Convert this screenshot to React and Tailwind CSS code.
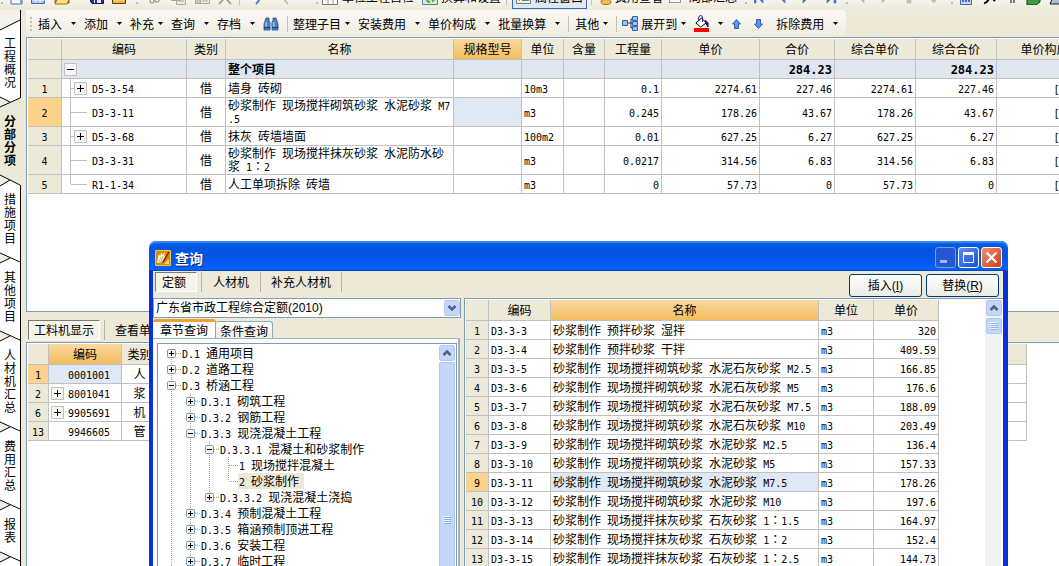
import { Fragment, useState } from 'react';

const sideTabs = ['工程概况', '分部分项', '措施项目', '其他项目', '人材机汇总', '费用汇总', '报表'];

const budgetRows = [
  { no: '1', code: 'D5-3-54', expand: true, kind: '借', name: '墙身 砖砌', unit: '10m3', qty: '0.1', price: '2274.61', total: '227.46' },
  { no: '2', code: 'D3-3-11', kind: '借', name: '砂浆制作 现场搅拌砌筑砂浆 水泥砂浆 M7.5', unit: 'm3', qty: '0.245', price: '178.26', total: '43.67', active: true },
  { no: '3', code: 'D5-3-68', expand: true, kind: '借', name: '抹灰 砖墙墙面', unit: '100m2', qty: '0.01', price: '627.25', total: '6.27' },
  { no: '4', code: 'D3-3-31', kind: '借', name: '砂浆制作 现场搅拌抹灰砂浆 水泥防水砂浆 1：2', unit: 'm3', qty: '0.0217', price: '314.56', total: '6.83' },
  { no: '5', code: 'R1-1-34', kind: '借', name: '人工单项拆除 砖墙', unit: 'm3', qty: '0', price: '57.73', total: '0', last: true }
];

const resourceRows = [
  { no: '1', code: '0001001', kind: '人', active: true },
  { no: '2', code: '8001041', kind: '浆', expand: true },
  { no: '6', code: '9905691', kind: '机', expand: true },
  { no: '13', code: '9946605', kind: '管' }
];

const quotaRows = [
  ['D3-3-3', '砂浆制作 预拌砂浆 湿拌', '320'],
  ['D3-3-4', '砂浆制作 预拌砂浆 干拌', '409.59'],
  ['D3-3-5', '砂浆制作 现场搅拌砌筑砂浆 水泥石灰砂浆 M2.5', '166.85'],
  ['D3-3-6', '砂浆制作 现场搅拌砌筑砂浆 水泥石灰砂浆 M5', '176.6'],
  ['D3-3-7', '砂浆制作 现场搅拌砌筑砂浆 水泥石灰砂浆 M7.5', '188.09'],
  ['D3-3-8', '砂浆制作 现场搅拌砌筑砂浆 水泥石灰砂浆 M10', '203.49'],
  ['D3-3-9', '砂浆制作 现场搅拌砌筑砂浆 水泥砂浆 M2.5', '136.4'],
  ['D3-3-10', '砂浆制作 现场搅拌砌筑砂浆 水泥砂浆 M5', '157.33'],
  ['D3-3-11', '砂浆制作 现场搅拌砌筑砂浆 水泥砂浆 M7.5', '178.26'],
  ['D3-3-12', '砂浆制作 现场搅拌砌筑砂浆 水泥砂浆 M10', '197.6'],
  ['D3-3-13', '砂浆制作 现场搅拌抹灰砂浆 石灰砂浆 1：1.5', '164.97'],
  ['D3-3-14', '砂浆制作 现场搅拌抹灰砂浆 石灰砂浆 1：2', '152.4'],
  ['D3-3-15', '砂浆制作 现场搅拌抹灰砂浆 石灰砂浆 1：2.5', '144.73']
];

// guides: one letter per indent level
// v = line passing, t = branch, l = last branch, + / - = toggle box
const treeRows = [
  { guides: '+', label: 'D.1 通用项目', first: true },
  { guides: '+', label: 'D.2 道路工程' },
  { guides: '-', label: 'D.3 桥涵工程' },
  { guides: 'v+', label: 'D.3.1 砌筑工程' },
  { guides: 'v+', label: 'D.3.2 钢筋工程' },
  { guides: 'v-', label: 'D.3.3 现浇混凝土工程' },
  { guides: 'vv-', label: 'D.3.3.1 混凝土和砂浆制作' },
  { guides: 'vvvt', label: '1 现场搅拌混凝土' },
  { guides: 'vvvl', label: '2 砂浆制作' },
  { guides: 'vv+', label: 'D.3.3.2 现浇混凝土浇捣', end: true },
  { guides: 'v+', label: 'D.3.4 预制混凝土工程' },
  { guides: 'v+', label: 'D.3.5 箱涵预制顶进工程' },
  { guides: 'v+', label: 'D.3.6 安装工程' },
  { guides: 'v+', label: 'D.3.7 临时工程' }
];

const headCell = 'h-[21px] border-r border-b border-[#c0c0c0] bg-[#ece9d8] p-0 text-center font-normal';
const headCellHot = 'h-[21px] border-r border-b border-[#c0c0c0] bg-linear-to-b from-[#fad9a0] to-[#f2bd5c] p-0 text-center font-normal';
const cell = 'border-r border-b border-[#c0c0c0] py-0 pr-0 pl-[2px]';
const midCell = 'border-r border-b border-[#c0c0c0] p-0 text-center';
const numCell = 'border-r border-b border-[#c0c0c0] py-0 pr-[2px] pl-0 text-right';
const table = 'table-fixed border-separate border-spacing-0 leading-[12px]';

const halfWidth = "font-['DejaVu_Sans_Mono',monospace] text-[10px] leading-[10px]";
const halfWidthBold = "font-['DejaVu_Sans_Mono',monospace] text-[12px] leading-[12px]";

// Latin runs go in a half-width mono face so that they line up with the Chinese text,
// and the full-width colon in a face that centres it
const Mixed = ({ children, bold }) =>
  String(children)
    .split(/([\x20-\x7e]+|：)/)
    .map((part, i) => {
      if (part === '：') {
        return <span key={i} lang="ja" className="font-['Noto_Sans_CJK_JP',sans-serif]">{part}</span>;
      }
      return i % 2 ? (
        <span key={i} className={bold ? halfWidthBold : halfWidth}>{part}</span>
      ) : (
        <Fragment key={i}>{part}</Fragment>
      );
    });

const Grip = () => (
  <svg width="3" height="16" className="shrink-0" aria-hidden="true">
    {[1, 5, 9, 13].map((y) => (
      <rect key={y} y={y} width="2" height="2" fill="#c1beb0" />
    ))}
  </svg>
);

const Divider = () => <span className="h-4 w-px shrink-0 bg-[#c5c2b0]" />;

const Caret = () => (
  <svg width="5" height="3" className="shrink-0" aria-hidden="true">
    <path d="M0 0h5L2.500 3z" fill="#000" />
  </svg>
);

const MenuButton = ({ label, tight, children }) => (
  <button type="button" aria-label={label} className={`mr-2 flex shrink-0 items-center ${tight ? 'gap-1' : 'gap-[9px]'}`}>
    {children ?? label}
    <Caret />
  </button>
);

/* ---------- top strip ---------- */

const NavArrow = ({ d, gray }) => (
  <svg width="12" height="16" viewBox="0 0 12 16" className="shrink-0" aria-hidden="true">
    <path d={d} fill={gray ? '#c4c1b4' : '#4a86e8'} stroke={gray ? '#b5b2a4' : '#2f63c0'} strokeWidth="0.6" />
  </svg>
);

const TopStrip = () => (
  <header className="flex h-[10px] shrink-0 items-end overflow-hidden bg-linear-to-b from-[#f6f4ec] to-[#ece9d8]">
    <div className="flex h-[26px] shrink-0 items-center whitespace-nowrap">
      <span className="mr-[6px] ml-px flex"><Grip /></span>
      <svg width="16" height="16" className="mr-[5px] shrink-0"><path d="M1 0h11v15H1z" fill="#f4f9ff" stroke="#49719f" /><path d="M10 11h2v3h-2z" fill="#7aa0d0" /></svg>
      <svg width="16" height="16" className="mr-[7px] shrink-0"><path d="M.5.5h13v14H.5z" fill="#9fc1f5" stroke="#4667a5" /><path d="M1 8h13M1 11h13M5 1v13M9 1v13" stroke="#fff" /></svg>
      <svg width="18" height="16" className="mr-[18px] shrink-0"><path d="M1 14V2h6l2 2h6v10z" fill="#d7962a" stroke="#8a5a10" /><path d="M1 15l4-9h12l-4 9z" fill="#ffdf80" stroke="#a46d14" /></svg>
      <svg width="15" height="16" className="mr-[7px] shrink-0"><path d="M.5.5h13v14H2l-1.500-2z" fill="#2b2ba0" stroke="#101060" /><path d="M4 9h7v5H4z" fill="#e8ecf8" /><path d="M5 10h2v4H5z" fill="#2b2ba0" /></svg>
      <svg width="15" height="16" className="mr-[9px] shrink-0"><path d="M.5 2.500h13v12H.5z" fill="#f0b73e" stroke="#5b3c0a" /><path d="M2 10h10" stroke="#ffe6a0" strokeWidth="3" /></svg>
      <Grip />
      <svg width="14" height="16" className="ml-[10px] mr-[8px] shrink-0"><path d="M3 0l5 9M9 0L5 9" stroke="#aaa799" strokeWidth="1.500" /><circle cx="3" cy="12" r="2" fill="none" stroke="#aaa799" strokeWidth="1.500" /><circle cx="8" cy="11" r="2" fill="none" stroke="#aaa799" strokeWidth="1.500" /></svg>
      <svg width="16" height="16" className="mr-2 shrink-0"><path d="M.5.5h9v11h-9zM5.500 4.500h9v11h-9z" fill="#eceadf" stroke="#aaa799" /><path d="M8 9h5M8 12h5" stroke="#aaa799" /></svg>
      <svg width="16" height="16" className="mr-[7px] shrink-0"><path d="M.5.500h12v14H.5z" fill="#c9c6b9" stroke="#aaa799" /><path d="M5.500 5.500h9v9h-9z" fill="#f1efe6" stroke="#aaa799" /><path d="M7 9h6M7 12h6" stroke="#aaa799" /></svg>
      <svg width="15" height="16" className="mr-[6px] shrink-0"><path d="M1 2l12 13M13 2L1 15" stroke="#aaa799" strokeWidth="2" /></svg>
      <Divider />
      <svg width="14" height="16" className="mx-[10px] shrink-0"><path d="M2 2c10-1 11 6 4 13" fill="none" stroke="#4a7edc" strokeWidth="2" /></svg>
      <svg width="14" height="16" className="ml-[6px] mr-[22px] shrink-0"><path d="M12 2C2 1 1 8 8 15" fill="none" stroke="#c4c1b4" strokeWidth="2" /></svg>
      <Grip />
      <svg width="17" height="16" className="mx-[3px] shrink-0"><path d="M.5.5h15v15H.5z" fill="#fff" stroke="#777" /><path d="M1 10h15M6 1v15M11 1v15" stroke="#999" /><path d="M2 8h4l-2 4z" fill="#55b030" /></svg>
      <button type="button" className="mr-2">单位工程自检</button>
      <button type="button" className="flex items-center gap-[2px]">
        <svg width="17" height="17"><path d="M.5.5h15v15H.5z" fill="#d6efcb" stroke="#587cbd" /><circle cx="8" cy="9" r="4" fill="none" stroke="#4fa83a" strokeWidth="2" strokeDasharray="4 2" /></svg>
        换算和设置
      </button>
      <span className="mx-[5px] flex"><Divider /></span>
      <button type="button" className="flex h-[23px] items-center gap-1 border border-[#316ac5] bg-[#e1e6f0] px-[3px]">
        <svg width="15" height="16"><path d="M.5.5h14v14H.5z" fill="#eef3ea" stroke="#777" /><path d="M3 11h1M6 11h7M3 7h1M6 7h7" stroke="#4f9a4f" strokeWidth="2" /></svg>
        属性窗口
      </button>
      <span className="mr-[5px] ml-1 flex"><Divider /></span>
      <button type="button" className="flex items-center gap-[2px]">
        <svg width="16" height="16"><ellipse cx="6" cy="9" rx="5" ry="2" fill="#f3c14e" stroke="#a9741a" /><ellipse cx="9" cy="13" rx="5" ry="2.500" fill="#f3c14e" stroke="#a9741a" /></svg>
        费用查看
      </button>
      <label className="ml-[6px] flex items-center gap-2">
        <input type="checkbox" className="size-[12px] appearance-none border border-[#9a978a] bg-[#f7f6f0]" />
        局部汇总
      </label>
      <span className="mr-[6px] ml-2 flex"><Grip /></span>
      <div className="flex gap-[12px]">
        <NavArrow d="M0 2h2v12H0zM9 2v12L3 8z" />
        <NavArrow d="M7 2v12L1 8z" />
        <NavArrow d="M1 2v12l6-6z" />
        <NavArrow d="M1 2v12l6-6zM8 2h2v12H8z" />
      </div>
      <span className="mx-2 flex"><Grip /></span>
      <div className="mr-[10px] flex gap-[12px]">
        <NavArrow gray d="M7 2v12L1 8z" />
        <NavArrow gray d="M1 2v12l6-6z" />
        <NavArrow gray d="M2 9h4v5H2z" />
        <NavArrow gray d="M0 9h9l-4 5z" />
      </div>
      <Grip />
      <svg width="13" height="16" className="mx-[6px] shrink-0"><path d="M.5.5h11v15H.5z" fill="#c8daf7" stroke="#4568a8" /><path d="M2 9h8M2 12h8" stroke="#4568a8" strokeDasharray="2 1" strokeWidth="2" /></svg>
      <svg width="16" height="16" className="mr-[9px] ml-1 shrink-0"><path d="M1 14c4 1 4-6 8-6M8 8l4 4" fill="none" stroke="#000" strokeWidth="2" /></svg>
      <svg width="12" height="16" className="mr-[6px] shrink-0"><path d="M3 2v12M6 2v12" stroke="#000" /></svg>
      <svg width="15" height="16" className="mr-[8px] shrink-0"><path d="M1 3l10-2 3 2v10l-4 3H1z" fill="#3f9a45" stroke="#123f16" /></svg>
      <svg width="16" height="16" className="shrink-0"><path d="M1 15l3-7h12v7z" fill="#a9bcd8" stroke="#222" /></svg>
    </div>
  </header>
);

/* ---------- left tabs ---------- */

const TabEdge = ({ type }) => (
  <svg width="22" height="26" className="block shrink-0" aria-hidden="true">
    {type === 'top' && (
      <>
        <path d="M0 0h20v10L0 20z" fill="#f3f2ea" />
        <path d="M20 10v16H0v-6z" fill="#fff" />
        <path d="M0 20L20 10" stroke="#000" fill="none" />
        <path d="M20.500 0v26" stroke="#000" />
      </>
    )}
    {type === 'plain' && (
      <>
        <path d="M0 0h20v26H0z" fill="#fff" />
        <path d="M0 9l10 5-10 5z" fill="#f0eee3" />
        <path d="M0 9l20 9M0 19l10-5" stroke="#000" fill="none" />
        <path d="M20.500 0v26" stroke="#000" />
      </>
    )}
    {type === 'before' && (
      <>
        <path d="M0 0h20v10L0 19z" fill="#fff" />
        <path d="M0 9l10 5-10 5z" fill="#f0eee3" />
        <path d="M0 19l20-9M0 9l10 5" stroke="#000" fill="none" />
        <path d="M20.500 0v10" stroke="#000" />
      </>
    )}
    {type === 'after' && (
      <>
        <path d="M0 9l20 10v7H0z" fill="#fff" />
        <path d="M0 9l10 5-10 6z" fill="#f0eee3" />
        <path d="M0 9l20 10M0 20l10-6" stroke="#000" fill="none" />
        <path d="M20.500 19v7" stroke="#000" />
      </>
    )}
  </svg>
);

const SideTabs = () => {
  const [active, setActive] = useState(1);

  return (
    <nav className="flex w-[22px] shrink-0 flex-col">
      <TabEdge type={active === 0 ? 'before' : 'top'} />
      {sideTabs.map((label, i) => (
        <Fragment key={label}>
          <button
            type="button"
            onClick={() => setActive(i)}
            className={`flex w-[21px] shrink-0 pl-1 ${
              i === active ? 'bg-[#ece9d8] font-bold' : 'border-r border-black bg-white'
            }`}
          >
            <span className="w-[13px] text-left leading-[13px] break-all">{label}</span>
          </button>
          <TabEdge type={i === active ? 'after' : i + 1 === active ? 'before' : 'plain'} />
        </Fragment>
      ))}
    </nav>
  );
};

/* ---------- second toolbar ---------- */

const ActionBar = () => (
  <div className="flex h-[27px] shrink-0">
    <div className="flex shrink-0 items-center rounded-r bg-linear-to-b from-[#fbfaf6] to-[#efecdf] pl-1 whitespace-nowrap">
      <Grip />
      <span className="w-[5px]" />
      <MenuButton label="插入" />
      <MenuButton label="添加" />
      <MenuButton label="补充" tight />
      <MenuButton label="查询" />
      <MenuButton label="存档" />
      <button type="button" aria-label="查找" className="mr-2">
        <svg width="16" height="14" viewBox="0 0 16 14" className="block">
          <path d="M3 1h3v3l1 1v8H1V7zM10 1h3l2 6v6H9V5l1-1z" fill="#4b7fc4" stroke="#24508c" strokeWidth="0.8" />
          <path d="M6.500 5h3v4h-3z" fill="#7ea6dc" />
          <path d="M3 5v6M11 5v6" stroke="#cfe0f7" />
          <path d="M1 10.500h6M9 10.500h6" stroke="#173a70" />
        </svg>
      </button>
      <Divider />
      <span className="w-[5px]" />
      <MenuButton label="整理子目" tight />
      <MenuButton label="安装费用" />
      <MenuButton label="单价构成" />
      <MenuButton label="批量换算" />
      <Divider />
      <span className="w-[6px]" />
      <MenuButton label="其他" tight />
      <Divider />
      <span className="w-[5px]" />
      <MenuButton label="展开到" tight>
        <span className="flex items-center gap-[3px]">
          <svg width="16" height="15" viewBox="0 0 16 15">
            <path d="M6 7h3M9 3v9M9 3h2M9 12h2M9 7h2" stroke="#333" fill="none" />
            <path d="M.5 4.500h5v5h-5zM10.500.500h5v4h-5zM10.500 5.500h5v4h-5zM10.500 10.500h5v4h-5z" fill="#9cc3f7" stroke="#2f62b5" />
          </svg>
          展开到
        </span>
      </MenuButton>
      <MenuButton label="填充颜色">
        <svg width="15" height="17" viewBox="0 0 16 17" preserveAspectRatio="none">
          <path d="M2 8l6-5 5 5-6 4z" fill="#fff" stroke="#000" />
          <path d="M5 6V2l2-2 2 2v5" fill="none" stroke="#14148c" />
          <path d="M12 5l3 3v4l-2-3z" fill="#14148c" stroke="#14148c" />
          <path d="M0 13h16v4H0z" fill="#f00" />
        </svg>
      </MenuButton>
      <button type="button" aria-label="上移" className="mr-[13px] ml-px">
        <svg width="9" height="10" className="block"><path d="M4.500.5l4 4.500H6.500v4.500h-4V5H.5z" fill="#5b93ee" stroke="#2d62bd" /></svg>
      </button>
      <button type="button" aria-label="下移" className="mr-[13px]">
        <svg width="9" height="10" className="block"><path d="M4.500 9.500l4-4.500H6.500V.5h-4V5H.5z" fill="#5b93ee" stroke="#2d62bd" /></svg>
      </button>
      <MenuButton label="拆除费用" />
    </div>
  </div>
);

/* ---------- grids ---------- */

const Toggle = ({ open }) => (
  <svg width="13" height="13" className="block shrink-0" aria-hidden="true">
    <path d="M.5.5h12v12H.5z" fill="#f7f6f2" stroke="#c0c0c0" />
    <path d={open ? 'M3 6.500h7' : 'M3 6.500h7M6.500 3v7'} stroke="#000" />
  </svg>
);

const BudgetGrid = () => (
  <table className={`${table} w-[1089px]`}>
    <colgroup>
      <col className="w-[34px]" />
      <col className="w-[125px]" />
      <col className="w-[39px]" />
      <col className="w-[228px]" />
      <col className="w-[68px]" />
      <col className="w-[42px]" />
      <col className="w-[41px]" />
      <col className="w-[57px]" />
      <col className="w-[98px]" />
      <col className="w-[75px]" />
      <col className="w-[81px]" />
      <col className="w-[81px]" />
      <col className="w-[120px]" />
    </colgroup>
    <thead>
      <tr>
        <th className={headCell} />
        {['编码', '类别', '名称'].map((h) => (
          <th key={h} className={headCell}>{h}</th>
        ))}
        <th className={headCellHot}>规格型号</th>
        {['单位', '含量', '工程量', '单价', '合价', '综合单价', '综合合价', '单价构成文件'].map((h) => (
          <th key={h} className={headCell}>{h}</th>
        ))}
      </tr>
    </thead>
    <tbody>
      <tr className="h-[19px] bg-[#dfe6f0] font-bold">
        <td className={`${cell} bg-[#ece9d8]`} />
        <td className={cell}><Toggle open /></td>
        <td className={cell} />
        <td className={cell}>整个项目</td>
        <td className={cell} />
        <td className={cell} />
        <td className={cell} />
        <td className={cell} />
        <td className={cell} />
        <td className={numCell}><Mixed bold>284.23</Mixed></td>
        <td className={cell} />
        <td className={numCell}><Mixed bold>284.23</Mixed></td>
        <td className={cell} />
      </tr>
      {budgetRows.map((row) => (
        <tr key={row.no} className={row.name.length > 20 ? 'h-[29px]' : 'h-[19px]'}>
          <td className={`${midCell} ${row.active ? 'bg-[#ffd28c]' : 'bg-[#ece9d8]'}`}><Mixed>{row.no}</Mixed></td>
          <td className="border-r border-b border-[#c0c0c0] p-0">
            <div className={`flex items-center ${row.name.length > 20 ? 'h-[28px]' : 'h-[18px]'}`}>
              <span className="flex h-full w-[9px] shrink-0 flex-col items-end">
                <span className={`w-px bg-[#c0c0c0] ${row.last ? 'h-1/2' : 'h-full'}`} />
              </span>
              <span className={`h-px bg-[#c0c0c0] ${row.expand ? 'w-[3px]' : 'w-[16px]'}`} />
              {row.expand ? <Toggle /> : null}
              <span className="ml-[5px]"><Mixed>{row.code}</Mixed></span>
            </div>
          </td>
          <td className={midCell}>{row.kind}</td>
          <td className={`${cell} [line-break:anywhere]`}><Mixed>{row.name}</Mixed></td>
          <td className={`${cell} ${row.active ? 'bg-[#dfe9f5]' : ''}`} />
          <td className={cell}><Mixed>{row.unit}</Mixed></td>
          <td className={cell} />
          <td className={numCell}><Mixed>{row.qty}</Mixed></td>
          <td className={numCell}><Mixed>{row.price}</Mixed></td>
          <td className={numCell}><Mixed>{row.total}</Mixed></td>
          <td className={numCell}><Mixed>{row.price}</Mixed></td>
          <td className={numCell}><Mixed>{row.total}</Mixed></td>
          <td className={midCell}><Mixed>[</Mixed></td>
        </tr>
      ))}
    </tbody>
  </table>
);

const ResourceGrid = () => (
  <table className={`${table} w-[999px]`}>
    <colgroup>
      <col className="w-[21px]" />
      <col className="w-[73px]" />
      <col className="w-[36px]" />
      <col />
    </colgroup>
    <thead>
      <tr>
        <th className={headCell} />
        <th className={headCellHot}>编码</th>
        <th className={headCell}>类别</th>
        <th className={headCell} />
      </tr>
    </thead>
    <tbody>
      {resourceRows.map((row) => (
        <tr key={row.no} className="h-[19px]">
          <td className={`${midCell} ${row.active ? 'bg-[#ffd28c]' : 'bg-[#ece9d8]'}`}><Mixed>{row.no}</Mixed></td>
          <td className={`${cell} ${row.active ? 'bg-[#dfe9f5]' : ''}`}>
            <div className="flex items-center">
              <span className="w-[17px]">{row.expand ? <Toggle /> : null}</span>
              <span><Mixed>{row.code}</Mixed></span>
            </div>
          </td>
          <td className={midCell}>{row.kind}</td>
          <td className={cell} />
        </tr>
      ))}
    </tbody>
  </table>
);

const QuotaGrid = () => {
  const [selected, setSelected] = useState('D3-3-11');

  return (
    <table className={`${table} w-[473px]`}>
      <colgroup>
        <col className="w-[23px]" />
        <col className="w-[62px]" />
        <col className="w-[268px]" />
        <col className="w-[55px]" />
        <col className="w-[65px]" />
      </colgroup>
      <thead>
        <tr>
          <th className={headCell} />
          <th className={headCell}>编码</th>
          <th className={headCellHot}>名称</th>
          <th className={headCell}>单位</th>
          <th className={headCell}>单价</th>
        </tr>
      </thead>
      <tbody>
        {quotaRows.map(([code, name, price], i) => (
          <tr key={code} className="h-[19px]" onClick={() => setSelected(code)}>
            <td className={`${midCell} ${code === selected ? 'bg-[#ffd28c]' : 'bg-[#ece9d8]'}`}><Mixed>{i + 1}</Mixed></td>
            <td className={cell}><Mixed>{code}</Mixed></td>
            <td className={`${cell} whitespace-nowrap ${code === selected ? 'bg-[#dfe9f5]' : ''}`}><Mixed>{name}</Mixed></td>
            <td className={cell}><Mixed>m3</Mixed></td>
            <td className={numCell}><Mixed>{price}</Mixed></td>
          </tr>
        ))}
      </tbody>
    </table>
  );
};

/* ---------- query dialog ---------- */

const TreeGuide = ({ kind, first, end }) => {
  const dots = { stroke: '#a5a294', strokeDasharray: '1 1', fill: 'none' };
  const box = kind === '+' || kind === '-';

  return (
    <svg width="19" height="16" className="block shrink-0" aria-hidden="true">
      <path d={`M9.500 ${first ? 8 : 0}V${kind === 'l' || end ? 8 : 16}`} {...dots} />
      {kind !== 'v' && <path d="M10 8.500h9" {...dots} />}
      {box && (
        <>
          <rect x="5.500" y="4.500" width="8" height="8" rx="1" fill="#f4f2ea" stroke="#7898b5" />
          <path d={kind === '+' ? 'M7 8.500h5M9.500 6v5' : 'M7 8.500h5'} stroke="#000" />
        </>
      )}
    </svg>
  );
};

const ChapterTree = () => {
  const [selected, setSelected] = useState('2 砂浆制作');

  return (
    <ul className="min-w-0 flex-1 overflow-hidden pl-1">
      {treeRows.map((row) => {
        const guides = row.guides.split('');
        return (
          <li key={row.label} className="flex h-4 items-center whitespace-nowrap">
            {guides.map((kind, i) => (
              <TreeGuide key={i} kind={kind} first={row.first} end={row.end && i === guides.length - 1} />
            ))}
            <button
              type="button"
              onClick={() => setSelected(row.label)}
              className={`h-4 pr-[5px] pl-px leading-4 ${row.label === selected ? 'bg-[#ece9d8]' : ''}`}
            >
              <Mixed>{row.label}</Mixed>
            </button>
          </li>
        );
      })}
    </ul>
  );
};

const ScrollArrow = ({ down }) => (
  <svg width="16" height="16" className="block shrink-0" aria-hidden="true">
    <rect x=".5" y=".5" width="15" height="15" rx="2" fill="#c6d6fb" stroke="#b2c6f3" />
    <path d={down ? 'M4.500 6l3.500 3.500L11.500 6' : 'M4.500 10L8 6.500l3.500 3.500'} fill="none" stroke="#4d6185" strokeWidth="2.500" />
  </svg>
);

const ThumbGrip = () => (
  <svg width="8" height="8" aria-hidden="true">
    <path d="M0 .5h7M0 2.500h7M0 4.500h7M0 6.500h7" stroke="#eef4fe" />
    <path d="M1 1.500h7M1 3.500h7M1 5.500h7M1 7.500h7" stroke="#8cb0f8" />
  </svg>
);

const titleButton = 'flex size-[21px] items-center justify-center rounded-[3px] border';

const TitleBar = () => (
  <div className="flex h-[30px] shrink-0 items-center rounded-t-[7px] bg-linear-to-b from-[#0058e0] via-[#0055e5] to-[#0066ff] px-[6px] pt-[3px] shadow-[inset_0_3px_2px_-1px_#3c90ff,inset_0_-2px_1px_-1px_#0040c8]">
    <svg width="16" height="16" className="mr-[4px] block" aria-hidden="true">
      <path d="M.5.5h15v15H.5z" fill="#d98a12" stroke="#f4c352" />
      <path d="M2 13l1-6 1-3 1 2 2-4 0 3 3-3-1 4 2-1-2 4c-1 3-4 4-7 4z" fill="#fff3d0" />
      <path d="M4 12l2-5M6 12l2-6" stroke="#c08a3a" strokeWidth="0.6" />
      <path d="M14 2L8 12" stroke="#7a2c06" strokeWidth="1.500" />
      <path d="M9 14h5V9z" fill="#ffd768" />
    </svg>
    <h2 className="text-[14px] leading-[18px] font-bold text-white [text-shadow:1px_1px_0_#0a2a80]">查询</h2>
    <div className="ml-auto flex gap-[2px]">
      <button type="button" aria-label="最小化" className={`${titleButton} border-[#7d9cec] bg-[#2457d2]`}>
        <svg width="13" height="13"><path d="M1 9h7v3H1z" fill="#9db6f0" /></svg>
      </button>
      <button type="button" aria-label="最大化" className={`${titleButton} border-white bg-linear-to-br from-[#5b8cf4] to-[#1a4fd0]`}>
        <svg width="13" height="13"><path d="M1.500 1.500h10v10h-10z" fill="none" stroke="#fff" /><path d="M1 1h11v3H1z" fill="#fff" /></svg>
      </button>
      <button type="button" aria-label="关闭" className={`${titleButton} border-white bg-linear-to-br from-[#f08c6e] to-[#d03a12]`}>
        <svg width="13" height="13"><path d="M1.500 1.500l10 10M11.500 1.500l-10 10" stroke="#fff" strokeWidth="2.200" /></svg>
      </button>
    </div>
  </div>
);

const dialogButton = 'h-[23px] w-[73px] rounded-[3px] border border-[#003c74] bg-linear-to-b from-white to-[#ecebe5] text-center';
const accelKey = "font-['Liberation_Sans',sans-serif]";

const QueryDialog = () => (
  <section aria-label="查询" className="absolute top-[241px] right-[51px] bottom-0 left-[149px] flex flex-col">
    <TitleBar />
    <div className="flex min-h-0 flex-1 flex-col border-r-[5px] border-l-4 border-[#0831d9] bg-[#ece9d8]">
      <div className="flex h-[27px] shrink-0 items-start pr-1 pl-[2px]">
        <div className="flex items-center pt-px">
          <button type="button" className="h-5 w-[42px] border border-t-[#7d7b70] border-r-white border-b-white border-l-[#7d7b70] bg-[#f5f3ea] pr-1">定额</button>
          <span className="mx-1 h-5 w-px bg-[#b5b2a4]" />
          <button type="button" className="h-5 w-[50px]">人材机</button>
          <span className="mx-1 h-5 w-px bg-[#b5b2a4]" />
          <button type="button" className="h-5 w-[72px]">补充人材机</button>
          <span className="mx-1 h-5 w-px bg-[#b5b2a4]" />
        </div>
        <div className="ml-auto flex gap-1 pt-[3px]">
          <button type="button" className={dialogButton}>插入<span className={accelKey}>(<u>I</u>)</span></button>
          <button type="button" className={dialogButton}>替换<span className={accelKey}>(<u>R</u>)</span></button>
        </div>
      </div>

      <div className="flex min-h-0 flex-1 gap-[3px]">
        <div className="flex w-[308px] shrink-0 flex-col">
          <div className="relative h-5 shrink-0">
            <select
              aria-label="定额库"
              defaultValue="gd2010"
              className="h-5 w-full appearance-none border border-[#7f9db9] bg-white pl-[2px] font-['Liberation_Sans','Noto_Sans_CJK_SC',sans-serif] leading-[18px]"
            >
              <option value="gd2010">广东省市政工程综合定额(2010)</option>
            </select>
            <span className="pointer-events-none absolute top-[2px] right-[1px]"><ScrollArrow down /></span>
          </div>
          <div className="flex h-5 shrink-0 items-end pt-px pr-[2px]">
            <button type="button" className="h-[19px] w-[63px] rounded-t-[3px] border-t-[3px] border-r border-t-[#f0a030] border-r-[#91a7b4] bg-[#fbfbf9] leading-[14px]">章节查询</button>
            <button type="button" className="h-[17px] w-[57px] rounded-t-[3px] border-t border-r border-[#91a7b4] bg-linear-to-b from-white to-[#efede3] leading-[15px]">条件查询</button>
          </div>
          <div className="mr-[1px] flex min-h-0 flex-1 border-t border-r-2 border-[#a5b4ba] bg-[#fbfbf9] pt-[4px] pr-px pl-[4px]">
            <div className="flex min-w-0 flex-1 overflow-hidden border-t border-r border-l border-[#7f9db9] bg-white pt-px pr-px">
              <ChapterTree />
              <div className="flex w-4 shrink-0 flex-col gap-px">
                <ScrollArrow />
                <span className="flex flex-1 items-end justify-center rounded-t-[2px] border-x border-t border-[#b2c6f3] bg-[#c6d6fb] pb-[42px]"><ThumbGrip /></span>
              </div>
            </div>
          </div>
        </div>

        <div className="flex min-w-0 flex-1 justify-between overflow-hidden border-t border-l border-[#7f9db9] bg-white pt-px pr-px pl-px">
          <QuotaGrid />
          <div className="flex w-[17px] shrink-0 flex-col items-center gap-[2px] bg-[#f5f3ef]">
            <ScrollArrow />
            <span className="flex size-4 items-center justify-center rounded-[2px] border border-[#b2c6f3] bg-[#c6d6fb]"><ThumbGrip /></span>
          </div>
        </div>
      </div>
    </div>
  </section>
);

const App = () => (
  <div className="relative flex h-screen flex-col overflow-hidden bg-[#ece9d8] font-['Noto_Sans_CJK_SC',sans-serif] text-[12px] leading-4 text-black">
    <TopStrip />
    <div className="flex min-h-0 flex-1">
      <SideTabs />
      <main className="ml-1 flex min-w-0 flex-1 flex-col">
        <ActionBar />
        <div className="h-[275px] shrink-0 overflow-hidden border-t border-b border-l border-[#7f9db9] bg-white pt-px pl-px">
          <BudgetGrid />
        </div>
        <div className="flex h-[30px] shrink-0 items-center pt-[6px] pl-[2px] whitespace-nowrap">
          <button type="button" className="h-5 w-[72px] border border-t-[#7d7b70] border-r-white border-b-white border-l-[#7d7b70] bg-[#f5f3ea]">工料机显示</button>
          <span className="ml-[4px] h-5 w-px bg-[#b5b2a4]" />
          <button type="button" className="ml-[10px]">查看单价构成</button>
        </div>
        <div className="min-h-0 flex-1 overflow-hidden border-t border-l border-[#7f9db9] bg-white pt-px pl-px">
          <ResourceGrid />
        </div>
      </main>
    </div>
    <QueryDialog />
  </div>
);

export default App;
